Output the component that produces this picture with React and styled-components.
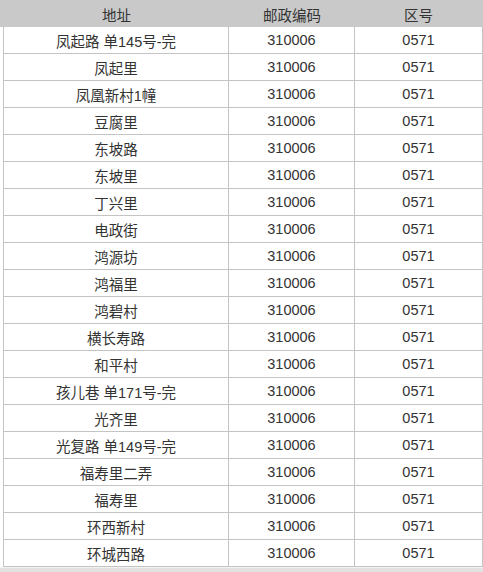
import React from "react";
import styled, { createGlobalStyle } from "styled-components";

const Global = createGlobalStyle`
  html, body { margin: 0; padding: 0; background: #ffffff; }
  body { font-family: "Liberation Sans", "Noto Sans CJK SC", sans-serif; }
`;

const Sheet = styled.div`
  width: 483px;
  height: 572px;
  overflow: hidden;
  background: #ffffff;
  display: flex;
  flex-direction: column;
`;

const HeaderRow = styled.div`
  display: grid;
  grid-template-columns: 225px 126px 127px;
  padding-left: 4px;
  height: 27px;
  background: #c9c9c9;
  flex-shrink: 0;
`;

const HeadCell = styled.div`
  display: flex;
  align-items: center;
  justify-content: center;
  font-size: 14.5px;
  color: #333333;
  padding-top: 1px;
`;

const Row = styled.div`
  display: grid;
  grid-template-columns: 225px 126px 127px;
  margin-left: 3px;
  width: 480px;
  box-sizing: border-box;
  border-left: 1px solid #c4c4c4;
  border-right: 1px solid #c4c4c4;
  border-bottom: 1px solid #c4c4c4;
  height: 27px;
  flex-shrink: 0;
`;

const Cell = styled.div`
  display: flex;
  align-items: center;
  justify-content: center;
  font-size: 14.5px;
  color: #333333;
  border-right: ${(p) => (p.$last ? "none" : "1px solid #c4c4c4")};
  white-space: nowrap;
`;

const Footer = styled.div`
  flex: 1;
  background: #e2e2e2;
  border-top: 1px solid #f2f2f2;
`;

const rows = [
  "凤起路 单145号-完",
  "凤起里",
  "凤凰新村1幢",
  "豆腐里",
  "东坡路",
  "东坡里",
  "丁兴里",
  "电政街",
  "鸿源坊",
  "鸿福里",
  "鸿碧村",
  "横长寿路",
  "和平村",
  "孩儿巷 单171号-完",
  "光齐里",
  "光复路 单149号-完",
  "福寿里二弄",
  "福寿里",
  "环西新村",
  "环城西路",
];

export default function App() {
  return (
    <>
      <Global />
      <Sheet>
        <HeaderRow>
          <HeadCell>地址</HeadCell>
          <HeadCell>邮政编码</HeadCell>
          <HeadCell>区号</HeadCell>
        </HeaderRow>
        {rows.map((r, i) => (
          <Row key={i}>
            <Cell>{r}</Cell>
            <Cell>310006</Cell>
            <Cell $last>0571</Cell>
          </Row>
        ))}
        <Footer />
      </Sheet>
    </>
  );
}
